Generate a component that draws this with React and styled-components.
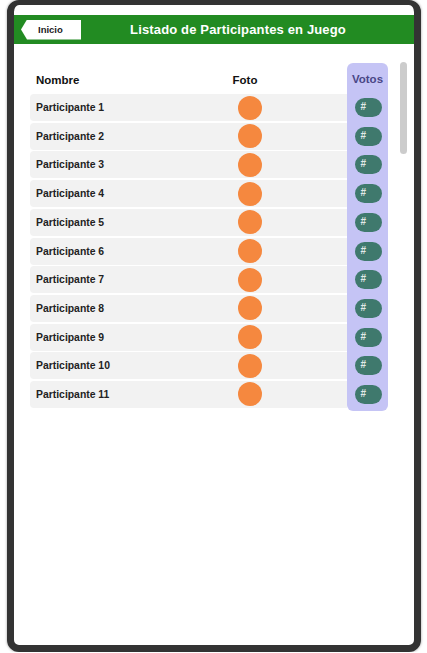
import React from 'react';
import styled, { createGlobalStyle } from 'styled-components';

const GlobalStyle = createGlobalStyle`
  html, body {
    margin: 0;
    padding: 0;
    background: #ffffff;
    font-family: "Liberation Sans", Arial, sans-serif;
  }
`;

const Frame = styled.div`
  box-sizing: border-box;
  width: 414px;
  height: 652px;
  margin-left: 7px;
  border: 7px solid #333333;
  border-top-width: 5px;
  border-radius: 12px;
  background: #ffffff;
  box-shadow: 0 0 2px 1px rgba(0, 0, 0, 0.18);
  padding-top: 10px;
  display: flex;
  flex-direction: column;
`;

const Header = styled.header`
  height: 29px;
  background: #228b22;
  display: flex;
  align-items: center;
  padding: 0 19px 0 7px;
`;

const BackButton = styled.button`
  width: 60px;
  height: 20px;
  border: none;
  background: #ffffff;
  clip-path: polygon(6px 0, 100% 0, 100% 100%, 6px 100%, 0 50%);
  font-family: "Liberation Sans", Arial, sans-serif;
  font-weight: bold;
  font-size: 9.5px;
  color: #222222;
  text-align: left;
  padding: 0 0 0 17px;
  cursor: pointer;
`;

const Title = styled.h1`
  flex: 1;
  margin: 0;
  text-align: center;
  color: #ffffff;
  font-size: 13px;
  letter-spacing: 0.15px;
  font-weight: bold;
`;

const Body = styled.div`
  display: flex;
  padding: 19px 0 0 16px;
`;

const Table = styled.div`
  width: 358px;
  display: flex;
`;

const MainColumn = styled.div`
  flex: 1;
  display: flex;
  flex-direction: column;
  gap: 1.7px;
`;

const HeadRow = styled.div`
  box-sizing: border-box;
  height: 29.4px;
  padding-top: 4px;
  display: grid;
  grid-template-columns: 160px 110px;
  align-items: center;
  font-size: 11.5px;
  font-weight: bold;
  color: #111111;
`;

const HeadCell = styled.div`
  padding-left: ${(p) => (p.$center ? '0' : '6px')};
  text-align: ${(p) => (p.$center ? 'center' : 'left')};
`;

const Row = styled.div`
  height: 27px;
  display: grid;
  grid-template-columns: 160px 110px;
  align-items: center;
  background: #f2f2f2;
  border-radius: 4px 0 0 4px;
`;

const NameCell = styled.div`
  padding-left: 6px;
  font-size: 10.4px;
  font-weight: bold;
  color: #222222;
`;

const PhotoCell = styled.div`
  display: flex;
  justify-content: center;
  padding-left: 10px;
`;

const Photo = styled.div`
  width: 24px;
  height: 24px;
  border-radius: 50%;
  background: #f5883f;
`;

const VotesColumn = styled.div`
  width: 41px;
  display: flex;
  flex-direction: column;
  gap: 1.7px;
  background: #c5c4f5;
  border-radius: 6px;
  padding-bottom: 3.5px;
`;

const VotesHead = styled.div`
  box-sizing: border-box;
  height: 29.4px;
  padding-top: 2px;
  display: flex;
  align-items: center;
  justify-content: center;
  font-size: 11.5px;
  font-weight: bold;
  color: #4a4787;
`;

const VoteCell = styled.div`
  height: 27px;
  display: flex;
  align-items: center;
  justify-content: center;
  padding-left: 1px;
`;

const VoteButton = styled.button`
  width: 27px;
  height: 19px;
  border: none;
  border-radius: 10px;
  background: #3f796d;
  color: rgba(255, 255, 255, 0.85);
  font-family: "Liberation Sans", Arial, sans-serif;
  font-size: 10px;
  font-weight: bold;
  text-align: left;
  padding: 0 0 2px 6px;
`;

const ScrollTrack = styled.div`
  width: 7px;
  margin-left: 12px;
  margin-top: -1px;
`;

const ScrollThumb = styled.div`
  height: 92px;
  border-radius: 4px;
  background: #cccccc;
`;

const participants = Array.from({ length: 11 }, (_, i) => `Participante ${i + 1}`);

export default function App() {
  return (
    <>
      <GlobalStyle />
      <Frame>
        <Header>
          <BackButton>Inicio</BackButton>
          <Title>Listado de Participantes en Juego</Title>
        </Header>
        <Body>
          <Table>
            <MainColumn>
              <HeadRow>
                <HeadCell>Nombre</HeadCell>
                <HeadCell $center>Foto</HeadCell>
              </HeadRow>
              {participants.map((name) => (
                <Row key={name}>
                  <NameCell>{name}</NameCell>
                  <PhotoCell>
                    <Photo />
                  </PhotoCell>
                </Row>
              ))}
            </MainColumn>
            <VotesColumn>
              <VotesHead>Votos</VotesHead>
              {participants.map((name) => (
                <VoteCell key={name}>
                  <VoteButton>#</VoteButton>
                </VoteCell>
              ))}
            </VotesColumn>
          </Table>
          <ScrollTrack>
            <ScrollThumb />
          </ScrollTrack>
        </Body>
      </Frame>
    </>
  );
}
